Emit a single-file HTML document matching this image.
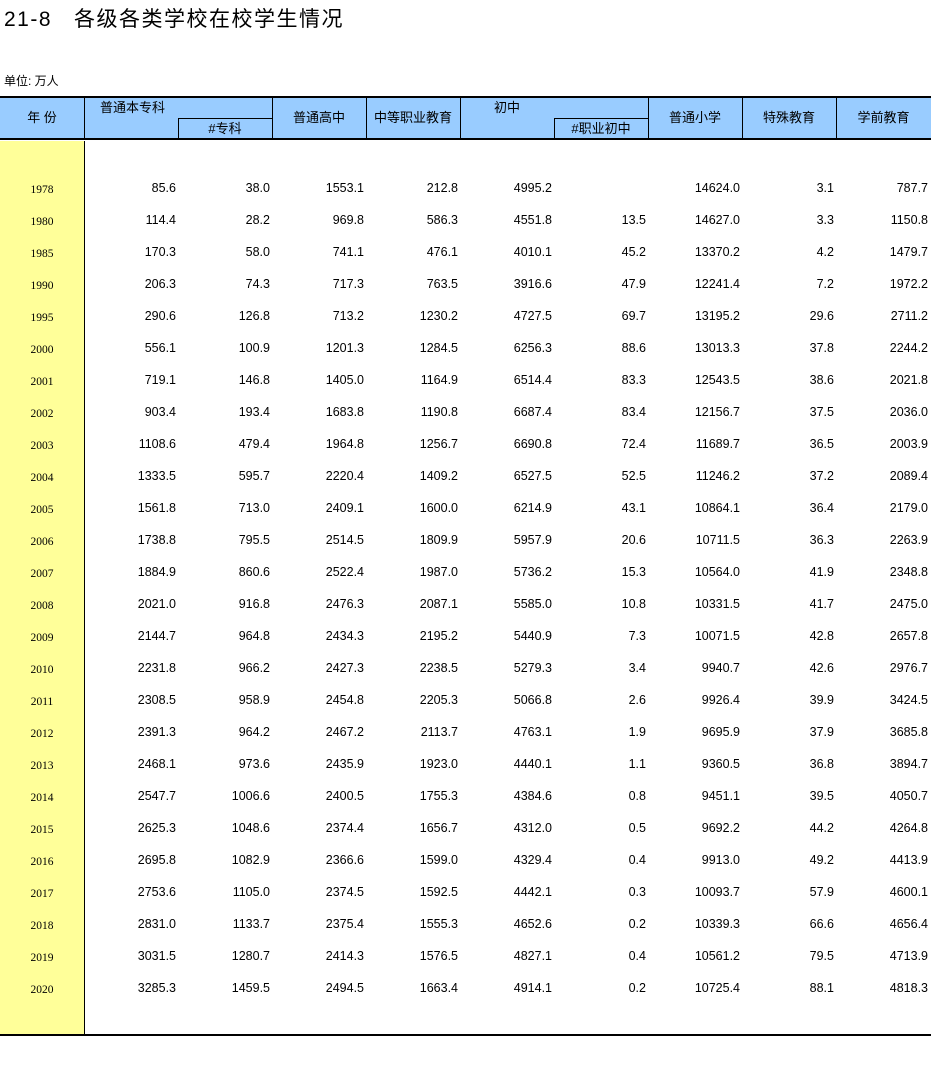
<!DOCTYPE html>
<html><head><meta charset="utf-8"><style>
body{margin:0;width:931px;height:1069px;background:#fff;position:relative;overflow:hidden;font-family:"Liberation Sans","Noto Sans CJK SC",sans-serif;color:#000}
.a{position:absolute}
.t{left:4px;top:3px;font-size:21px;letter-spacing:1.5px}
.u{left:4px;top:72px;font-size:12px}
.hd{left:0;top:96px;width:931px;height:44px;background:#99ccff;border-top:2px solid #000;border-bottom:2px solid #000;box-sizing:border-box}
.vl{position:absolute;width:1px;background:#000}
.hl{position:absolute;height:1px;background:#000}
.h{position:absolute;font-size:13px;text-align:center;line-height:17px}
.yc{left:0;top:141px;width:84px;height:894px;background:#ffff99;border-right:1px solid #000}
.bl{left:0;top:1034px;width:931px;height:2px;background:#000}
.r{position:absolute;left:0;width:931px;height:16px;font-size:12.5px;line-height:16px}
.r span{position:absolute;text-align:right;width:90px}
.r span.y{font-family:"Liberation Serif",serif;font-size:11.5px;text-align:center;width:84px;left:0;top:2px}
</style></head><body>
<div class="a t">21-8&nbsp;&nbsp;&nbsp;各级各类学校在校学生情况</div>
<div class="a u">单位: 万人</div>
<div class="a hd">
<div class="vl" style="left:84px;top:0;height:42px"></div>
<div class="vl" style="left:272px;top:0;height:42px"></div>
<div class="vl" style="left:366px;top:0;height:42px"></div>
<div class="vl" style="left:460px;top:0;height:42px"></div>
<div class="vl" style="left:648px;top:0;height:42px"></div>
<div class="vl" style="left:742px;top:0;height:42px"></div>
<div class="vl" style="left:836px;top:0;height:42px"></div>
<div class="vl" style="left:178px;top:20px;height:22px"></div>
<div class="vl" style="left:554px;top:20px;height:22px"></div>
<div class="hl" style="left:178px;top:20px;width:94px"></div>
<div class="hl" style="left:554px;top:20px;width:94px"></div>
<div class="h" style="left:0;top:11px;width:84px">年 份</div>
<div class="h" style="left:100px;top:1px">普通本专科</div>
<div class="h" style="left:178px;top:22px;width:94px">#专科</div>
<div class="h" style="left:272px;top:11px;width:94px">普通高中</div>
<div class="h" style="left:366px;top:11px;width:94px">中等职业教育</div>
<div class="h" style="left:494px;top:1px">初中</div>
<div class="h" style="left:554px;top:22px;width:94px">#职业初中</div>
<div class="h" style="left:648px;top:11px;width:94px">普通小学</div>
<div class="h" style="left:742px;top:11px;width:94px">特殊教育</div>
<div class="h" style="left:836px;top:11px;width:95px">学前教育</div>
</div>
<div class="a yc"></div>
<div class="a bl"></div>
<div id="rows">
<div class="r" style="top:180px"><span class="y">1978</span><span style="left:86px">85.6</span><span style="left:180px">38.0</span><span style="left:274px">1553.1</span><span style="left:368px">212.8</span><span style="left:462px">4995.2</span><span style="left:556px"></span><span style="left:650px">14624.0</span><span style="left:744px">3.1</span><span style="left:838px">787.7</span></div>
<div class="r" style="top:212px"><span class="y">1980</span><span style="left:86px">114.4</span><span style="left:180px">28.2</span><span style="left:274px">969.8</span><span style="left:368px">586.3</span><span style="left:462px">4551.8</span><span style="left:556px">13.5</span><span style="left:650px">14627.0</span><span style="left:744px">3.3</span><span style="left:838px">1150.8</span></div>
<div class="r" style="top:244px"><span class="y">1985</span><span style="left:86px">170.3</span><span style="left:180px">58.0</span><span style="left:274px">741.1</span><span style="left:368px">476.1</span><span style="left:462px">4010.1</span><span style="left:556px">45.2</span><span style="left:650px">13370.2</span><span style="left:744px">4.2</span><span style="left:838px">1479.7</span></div>
<div class="r" style="top:276px"><span class="y">1990</span><span style="left:86px">206.3</span><span style="left:180px">74.3</span><span style="left:274px">717.3</span><span style="left:368px">763.5</span><span style="left:462px">3916.6</span><span style="left:556px">47.9</span><span style="left:650px">12241.4</span><span style="left:744px">7.2</span><span style="left:838px">1972.2</span></div>
<div class="r" style="top:308px"><span class="y">1995</span><span style="left:86px">290.6</span><span style="left:180px">126.8</span><span style="left:274px">713.2</span><span style="left:368px">1230.2</span><span style="left:462px">4727.5</span><span style="left:556px">69.7</span><span style="left:650px">13195.2</span><span style="left:744px">29.6</span><span style="left:838px">2711.2</span></div>
<div class="r" style="top:340px"><span class="y">2000</span><span style="left:86px">556.1</span><span style="left:180px">100.9</span><span style="left:274px">1201.3</span><span style="left:368px">1284.5</span><span style="left:462px">6256.3</span><span style="left:556px">88.6</span><span style="left:650px">13013.3</span><span style="left:744px">37.8</span><span style="left:838px">2244.2</span></div>
<div class="r" style="top:372px"><span class="y">2001</span><span style="left:86px">719.1</span><span style="left:180px">146.8</span><span style="left:274px">1405.0</span><span style="left:368px">1164.9</span><span style="left:462px">6514.4</span><span style="left:556px">83.3</span><span style="left:650px">12543.5</span><span style="left:744px">38.6</span><span style="left:838px">2021.8</span></div>
<div class="r" style="top:404px"><span class="y">2002</span><span style="left:86px">903.4</span><span style="left:180px">193.4</span><span style="left:274px">1683.8</span><span style="left:368px">1190.8</span><span style="left:462px">6687.4</span><span style="left:556px">83.4</span><span style="left:650px">12156.7</span><span style="left:744px">37.5</span><span style="left:838px">2036.0</span></div>
<div class="r" style="top:436px"><span class="y">2003</span><span style="left:86px">1108.6</span><span style="left:180px">479.4</span><span style="left:274px">1964.8</span><span style="left:368px">1256.7</span><span style="left:462px">6690.8</span><span style="left:556px">72.4</span><span style="left:650px">11689.7</span><span style="left:744px">36.5</span><span style="left:838px">2003.9</span></div>
<div class="r" style="top:468px"><span class="y">2004</span><span style="left:86px">1333.5</span><span style="left:180px">595.7</span><span style="left:274px">2220.4</span><span style="left:368px">1409.2</span><span style="left:462px">6527.5</span><span style="left:556px">52.5</span><span style="left:650px">11246.2</span><span style="left:744px">37.2</span><span style="left:838px">2089.4</span></div>
<div class="r" style="top:500px"><span class="y">2005</span><span style="left:86px">1561.8</span><span style="left:180px">713.0</span><span style="left:274px">2409.1</span><span style="left:368px">1600.0</span><span style="left:462px">6214.9</span><span style="left:556px">43.1</span><span style="left:650px">10864.1</span><span style="left:744px">36.4</span><span style="left:838px">2179.0</span></div>
<div class="r" style="top:532px"><span class="y">2006</span><span style="left:86px">1738.8</span><span style="left:180px">795.5</span><span style="left:274px">2514.5</span><span style="left:368px">1809.9</span><span style="left:462px">5957.9</span><span style="left:556px">20.6</span><span style="left:650px">10711.5</span><span style="left:744px">36.3</span><span style="left:838px">2263.9</span></div>
<div class="r" style="top:564px"><span class="y">2007</span><span style="left:86px">1884.9</span><span style="left:180px">860.6</span><span style="left:274px">2522.4</span><span style="left:368px">1987.0</span><span style="left:462px">5736.2</span><span style="left:556px">15.3</span><span style="left:650px">10564.0</span><span style="left:744px">41.9</span><span style="left:838px">2348.8</span></div>
<div class="r" style="top:596px"><span class="y">2008</span><span style="left:86px">2021.0</span><span style="left:180px">916.8</span><span style="left:274px">2476.3</span><span style="left:368px">2087.1</span><span style="left:462px">5585.0</span><span style="left:556px">10.8</span><span style="left:650px">10331.5</span><span style="left:744px">41.7</span><span style="left:838px">2475.0</span></div>
<div class="r" style="top:628px"><span class="y">2009</span><span style="left:86px">2144.7</span><span style="left:180px">964.8</span><span style="left:274px">2434.3</span><span style="left:368px">2195.2</span><span style="left:462px">5440.9</span><span style="left:556px">7.3</span><span style="left:650px">10071.5</span><span style="left:744px">42.8</span><span style="left:838px">2657.8</span></div>
<div class="r" style="top:660px"><span class="y">2010</span><span style="left:86px">2231.8</span><span style="left:180px">966.2</span><span style="left:274px">2427.3</span><span style="left:368px">2238.5</span><span style="left:462px">5279.3</span><span style="left:556px">3.4</span><span style="left:650px">9940.7</span><span style="left:744px">42.6</span><span style="left:838px">2976.7</span></div>
<div class="r" style="top:692px"><span class="y">2011</span><span style="left:86px">2308.5</span><span style="left:180px">958.9</span><span style="left:274px">2454.8</span><span style="left:368px">2205.3</span><span style="left:462px">5066.8</span><span style="left:556px">2.6</span><span style="left:650px">9926.4</span><span style="left:744px">39.9</span><span style="left:838px">3424.5</span></div>
<div class="r" style="top:724px"><span class="y">2012</span><span style="left:86px">2391.3</span><span style="left:180px">964.2</span><span style="left:274px">2467.2</span><span style="left:368px">2113.7</span><span style="left:462px">4763.1</span><span style="left:556px">1.9</span><span style="left:650px">9695.9</span><span style="left:744px">37.9</span><span style="left:838px">3685.8</span></div>
<div class="r" style="top:756px"><span class="y">2013</span><span style="left:86px">2468.1</span><span style="left:180px">973.6</span><span style="left:274px">2435.9</span><span style="left:368px">1923.0</span><span style="left:462px">4440.1</span><span style="left:556px">1.1</span><span style="left:650px">9360.5</span><span style="left:744px">36.8</span><span style="left:838px">3894.7</span></div>
<div class="r" style="top:788px"><span class="y">2014</span><span style="left:86px">2547.7</span><span style="left:180px">1006.6</span><span style="left:274px">2400.5</span><span style="left:368px">1755.3</span><span style="left:462px">4384.6</span><span style="left:556px">0.8</span><span style="left:650px">9451.1</span><span style="left:744px">39.5</span><span style="left:838px">4050.7</span></div>
<div class="r" style="top:820px"><span class="y">2015</span><span style="left:86px">2625.3</span><span style="left:180px">1048.6</span><span style="left:274px">2374.4</span><span style="left:368px">1656.7</span><span style="left:462px">4312.0</span><span style="left:556px">0.5</span><span style="left:650px">9692.2</span><span style="left:744px">44.2</span><span style="left:838px">4264.8</span></div>
<div class="r" style="top:852px"><span class="y">2016</span><span style="left:86px">2695.8</span><span style="left:180px">1082.9</span><span style="left:274px">2366.6</span><span style="left:368px">1599.0</span><span style="left:462px">4329.4</span><span style="left:556px">0.4</span><span style="left:650px">9913.0</span><span style="left:744px">49.2</span><span style="left:838px">4413.9</span></div>
<div class="r" style="top:884px"><span class="y">2017</span><span style="left:86px">2753.6</span><span style="left:180px">1105.0</span><span style="left:274px">2374.5</span><span style="left:368px">1592.5</span><span style="left:462px">4442.1</span><span style="left:556px">0.3</span><span style="left:650px">10093.7</span><span style="left:744px">57.9</span><span style="left:838px">4600.1</span></div>
<div class="r" style="top:916px"><span class="y">2018</span><span style="left:86px">2831.0</span><span style="left:180px">1133.7</span><span style="left:274px">2375.4</span><span style="left:368px">1555.3</span><span style="left:462px">4652.6</span><span style="left:556px">0.2</span><span style="left:650px">10339.3</span><span style="left:744px">66.6</span><span style="left:838px">4656.4</span></div>
<div class="r" style="top:948px"><span class="y">2019</span><span style="left:86px">3031.5</span><span style="left:180px">1280.7</span><span style="left:274px">2414.3</span><span style="left:368px">1576.5</span><span style="left:462px">4827.1</span><span style="left:556px">0.4</span><span style="left:650px">10561.2</span><span style="left:744px">79.5</span><span style="left:838px">4713.9</span></div>
<div class="r" style="top:980px"><span class="y">2020</span><span style="left:86px">3285.3</span><span style="left:180px">1459.5</span><span style="left:274px">2494.5</span><span style="left:368px">1663.4</span><span style="left:462px">4914.1</span><span style="left:556px">0.2</span><span style="left:650px">10725.4</span><span style="left:744px">88.1</span><span style="left:838px">4818.3</span></div>
</div>
</body></html>
